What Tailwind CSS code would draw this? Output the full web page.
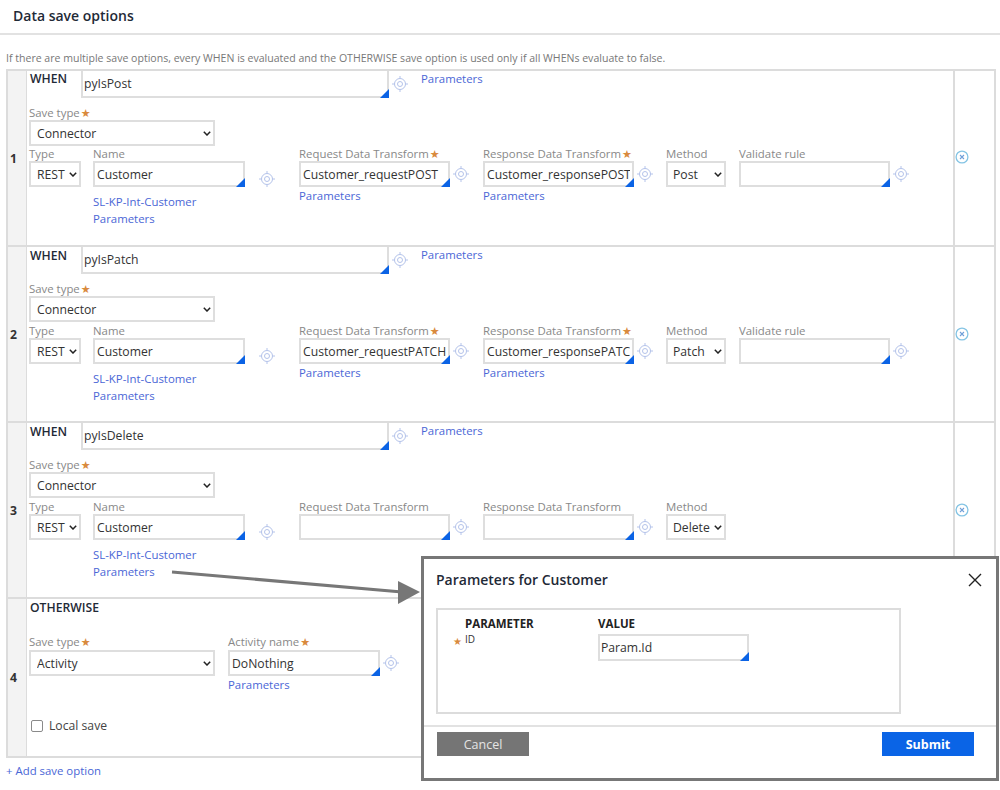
<!DOCTYPE html>
<html lang="en">
<head>
    <meta charset="UTF-8">
    <title>Data save options</title>
    <script src="https://cdn.jsdelivr.net/npm/@tailwindcss/browser@4"></script>
</head>
<body class="relative w-[1000px] h-[790px] overflow-hidden bg-white text-[#333] text-[11.4px] leading-[17px] font-['Open_Sans','DejaVu_Sans',sans-serif] [&_input]:text-[12.2px] [&_select]:text-[12.2px]">

    <svg class="hidden">
        <symbol id="target" viewBox="0 0 16 16">
            <g fill="none" stroke="#b4c3ea" stroke-width="1">
                <circle cx="8" cy="8" r="5.5"/>
                <circle cx="8" cy="8" r="2.5"/>
                <path d="M8 0v2.5M8 13.5V16M0 8h2.5M13.5 8H16"/>
            </g>
        </symbol>
        <symbol id="remove" viewBox="0 0 14 14">
            <circle cx="7" cy="7" r="5.9" fill="none" stroke="#84c4e4" stroke-width="1.3"/>
            <path d="M5 5l4 4M9 5l-4 4" fill="none" stroke="#6f9fd8" stroke-width="1.1"/>
        </symbol>
        <symbol id="chevron" viewBox="0 0 8 5">
            <path d="M.8.8L4 4l3.2-3.2" fill="none" stroke="#222" stroke-width="1.5"/>
        </symbol>
    </svg>

    <!-- Header -->
    <div class="h-[35px] border-b-2 border-[#e2e2e2] pl-[13px] pt-[5px]">
        <h1 class="text-[14px] leading-[22px] font-semibold text-[#1f2a37]">Data save options</h1>
    </div>
    <p class="pl-[6px] pt-[15px] h-[34px] text-[10.55px] leading-[17px] text-[#777]">If there are multiple save options, every WHEN is evaluated and the OTHERWISE save option is used only if all WHENs evaluate to false.</p>

    <!-- Save options table -->
    <div class="ml-[6px] w-[990px] border-2 border-[#dcdcdc]">

        <!-- Row 1 -->
        <div class="flex h-[176px] border-b-2 border-[#dcdcdc]">
            <div class="w-[19px] shrink-0 bg-[#f3f3f3] border-r border-[#dcdcdc] flex items-center justify-center pr-[7px] text-[12.2px] font-bold">1</div>
            <div class="flex-1 pl-[2px]">
                <div class="flex h-[27px]">
                    <span class="w-[52px] pl-[1px] -mt-[1px] text-[12.2px] font-semibold text-[#1f2a37]">WHEN</span>
                    <div class="relative w-[308px] h-[27px]">
                        <input class="w-full h-full border-2 border-t-0 border-[#dedede] px-[1px] bg-white" value="pyIsPost">
                        <span class="absolute right-0 bottom-0 w-[9px] h-[9px] bg-[#0b63e5] [clip-path:polygon(100%_0,100%_100%,0_100%)]"></span>
                    </div>
                    <svg class="w-[16px] h-[16px] ml-[3px] mt-[5px]"><use href="#target"/></svg>
                    <a class="ml-[13px] -mt-[1px] text-[#4a66d6]">Parameters</a>
                </div>
                <div class="pt-[6px] h-[22px] text-[#888]">Save type<span class="text-[#d98a3d] text-[11px] ml-[1px]">★</span></div>
                <div class="relative w-[186px] h-[26px]">
                    <select class="block appearance-none w-full h-full border-2 border-[#dedede] bg-white pl-[6px]"><option>Connector</option></select>
                    <svg class="absolute right-[4px] top-[11px] w-[8px] h-[5px]"><use href="#chevron"/></svg>
                </div>
                <div class="flex">
                    <div class="w-[52px] mr-[12px]">
                        <div class="h-[15px] leading-[15px] text-[#888]">Type</div>
                        <div class="relative h-[26px]">
                            <select class="block appearance-none w-full h-full border-2 border-[#dedede] bg-white pl-[6px]"><option>REST</option></select>
                            <svg class="absolute right-[4px] top-[11px] w-[8px] h-[5px]"><use href="#chevron"/></svg>
                        </div>
                    </div>
                    <div class="w-[152px] mr-[54px]">
                        <div class="h-[15px] leading-[15px] text-[#888]">Name</div>
                        <div class="relative h-[26px]">
                            <input class="w-full h-full border-2 border-[#dedede] px-[2px]" value="Customer">
                            <span class="absolute right-0 bottom-0 w-[9px] h-[9px] bg-[#0b63e5] [clip-path:polygon(100%_0,100%_100%,0_100%)]"></span>
                            <svg class="absolute left-[166px] top-[10px] w-[16px] h-[16px]"><use href="#target"/></svg>
                        </div>
                        <a class="block mt-[6px] text-[#4a66d6]">SL-KP-Int-Customer</a>
                        <a class="block text-[#4a66d6]">Parameters</a>
                    </div>
                    <div class="w-[151px] mr-[33px]">
                        <div class="h-[15px] leading-[15px] text-[#888] whitespace-nowrap">Request Data Transform<span class="text-[#d98a3d] text-[11px] ml-[1px]">★</span></div>
                        <div class="relative h-[26px]">
                            <input class="w-full h-full border-2 border-[#dedede] px-[2px]" value="Customer_requestPOST">
                            <span class="absolute right-0 bottom-0 w-[9px] h-[9px] bg-[#0b63e5] [clip-path:polygon(100%_0,100%_100%,0_100%)]"></span>
                            <svg class="absolute left-[154px] top-[5px] w-[16px] h-[16px]"><use href="#target"/></svg>
                        </div>
                        <a class="block text-[#4a66d6]">Parameters</a>
                    </div>
                    <div class="w-[151px] mr-[32px]">
                        <div class="h-[15px] leading-[15px] text-[#888] whitespace-nowrap">Response Data Transform<span class="text-[#d98a3d] text-[11px] ml-[1px]">★</span></div>
                        <div class="relative h-[26px]">
                            <input class="w-full h-full border-2 border-[#dedede] px-[2px]" value="Customer_responsePOST">
                            <span class="absolute right-0 bottom-0 w-[9px] h-[9px] bg-[#0b63e5] [clip-path:polygon(100%_0,100%_100%,0_100%)]"></span>
                            <svg class="absolute left-[154px] top-[5px] w-[16px] h-[16px]"><use href="#target"/></svg>
                        </div>
                        <a class="block text-[#4a66d6]">Parameters</a>
                    </div>
                    <div class="w-[60px] mr-[13px]">
                        <div class="h-[15px] leading-[15px] text-[#888]">Method</div>
                        <div class="relative h-[26px]">
                            <select class="block appearance-none w-full h-full border-2 border-[#dedede] bg-white pl-[5px]"><option>Post</option></select>
                            <svg class="absolute right-[4px] top-[11px] w-[8px] h-[5px]"><use href="#chevron"/></svg>
                        </div>
                    </div>
                    <div class="w-[151px]">
                        <div class="h-[15px] leading-[15px] text-[#888]">Validate rule</div>
                        <div class="relative h-[26px]">
                            <input class="w-full h-full border-2 border-[#dedede] px-[2px]">
                            <span class="absolute right-0 bottom-0 w-[9px] h-[9px] bg-[#0b63e5] [clip-path:polygon(100%_0,100%_100%,0_100%)]"></span>
                            <svg class="absolute left-[154px] top-[5px] w-[16px] h-[16px]"><use href="#target"/></svg>
                        </div>
                    </div>
                </div>
            </div>
            <div class="w-[41px] shrink-0 border-l-2 border-[#dcdcdc] flex items-center justify-center pr-[26px] pb-[3px]">
                <svg class="w-[14px] h-[14px] shrink-0"><use href="#remove"/></svg>
            </div>
        </div>

        <!-- Row 2 -->
        <div class="flex h-[176px] border-b-2 border-[#dcdcdc]">
            <div class="w-[19px] shrink-0 bg-[#f3f3f3] border-r border-[#dcdcdc] flex items-center justify-center pr-[7px] text-[12.2px] font-bold">2</div>
            <div class="flex-1 pl-[2px]">
                <div class="flex h-[27px]">
                    <span class="w-[52px] pl-[1px] text-[12.2px] font-semibold text-[#1f2a37]">WHEN</span>
                    <div class="relative w-[308px] h-[27px]">
                        <input class="w-full h-full border-2 border-t-0 border-[#dedede] px-[1px] bg-white" value="pyIsPatch">
                        <span class="absolute right-0 bottom-0 w-[9px] h-[9px] bg-[#0b63e5] [clip-path:polygon(100%_0,100%_100%,0_100%)]"></span>
                    </div>
                    <svg class="w-[16px] h-[16px] ml-[3px] mt-[5px]"><use href="#target"/></svg>
                    <a class="ml-[13px] -mt-[1px] text-[#4a66d6]">Parameters</a>
                </div>
                <div class="pt-[6px] h-[22px] text-[#888]">Save type<span class="text-[#d98a3d] text-[11px] ml-[1px]">★</span></div>
                <div class="relative w-[186px] h-[26px]">
                    <select class="block appearance-none w-full h-full border-2 border-[#dedede] bg-white pl-[6px]"><option>Connector</option></select>
                    <svg class="absolute right-[4px] top-[11px] w-[8px] h-[5px]"><use href="#chevron"/></svg>
                </div>
                <div class="flex mt-[1px]">
                    <div class="w-[52px] mr-[12px]">
                        <div class="h-[15px] leading-[15px] text-[#888]">Type</div>
                        <div class="relative h-[26px]">
                            <select class="block appearance-none w-full h-full border-2 border-[#dedede] bg-white pl-[6px]"><option>REST</option></select>
                            <svg class="absolute right-[4px] top-[11px] w-[8px] h-[5px]"><use href="#chevron"/></svg>
                        </div>
                    </div>
                    <div class="w-[152px] mr-[54px]">
                        <div class="h-[15px] leading-[15px] text-[#888]">Name</div>
                        <div class="relative h-[26px]">
                            <input class="w-full h-full border-2 border-[#dedede] px-[2px]" value="Customer">
                            <span class="absolute right-0 bottom-0 w-[9px] h-[9px] bg-[#0b63e5] [clip-path:polygon(100%_0,100%_100%,0_100%)]"></span>
                            <svg class="absolute left-[166px] top-[10px] w-[16px] h-[16px]"><use href="#target"/></svg>
                        </div>
                        <a class="block mt-[6px] text-[#4a66d6]">SL-KP-Int-Customer</a>
                        <a class="block text-[#4a66d6]">Parameters</a>
                    </div>
                    <div class="w-[151px] mr-[33px]">
                        <div class="h-[15px] leading-[15px] text-[#888] whitespace-nowrap">Request Data Transform<span class="text-[#d98a3d] text-[11px] ml-[1px]">★</span></div>
                        <div class="relative h-[26px]">
                            <input class="w-full h-full border-2 border-[#dedede] px-[2px]" value="Customer_requestPATCH">
                            <span class="absolute right-0 bottom-0 w-[9px] h-[9px] bg-[#0b63e5] [clip-path:polygon(100%_0,100%_100%,0_100%)]"></span>
                            <svg class="absolute left-[154px] top-[5px] w-[16px] h-[16px]"><use href="#target"/></svg>
                        </div>
                        <a class="block text-[#4a66d6]">Parameters</a>
                    </div>
                    <div class="w-[151px] mr-[32px]">
                        <div class="h-[15px] leading-[15px] text-[#888] whitespace-nowrap">Response Data Transform<span class="text-[#d98a3d] text-[11px] ml-[1px]">★</span></div>
                        <div class="relative h-[26px]">
                            <input class="w-full h-full border-2 border-[#dedede] px-[2px]" value="Customer_responsePATCH">
                            <span class="absolute right-0 bottom-0 w-[9px] h-[9px] bg-[#0b63e5] [clip-path:polygon(100%_0,100%_100%,0_100%)]"></span>
                            <svg class="absolute left-[154px] top-[5px] w-[16px] h-[16px]"><use href="#target"/></svg>
                        </div>
                        <a class="block text-[#4a66d6]">Parameters</a>
                    </div>
                    <div class="w-[60px] mr-[13px]">
                        <div class="h-[15px] leading-[15px] text-[#888]">Method</div>
                        <div class="relative h-[26px]">
                            <select class="block appearance-none w-full h-full border-2 border-[#dedede] bg-white pl-[5px]"><option>Patch</option></select>
                            <svg class="absolute right-[4px] top-[11px] w-[8px] h-[5px]"><use href="#chevron"/></svg>
                        </div>
                    </div>
                    <div class="w-[151px]">
                        <div class="h-[15px] leading-[15px] text-[#888]">Validate rule</div>
                        <div class="relative h-[26px]">
                            <input class="w-full h-full border-2 border-[#dedede] px-[2px]">
                            <span class="absolute right-0 bottom-0 w-[9px] h-[9px] bg-[#0b63e5] [clip-path:polygon(100%_0,100%_100%,0_100%)]"></span>
                            <svg class="absolute left-[154px] top-[5px] w-[16px] h-[16px]"><use href="#target"/></svg>
                        </div>
                    </div>
                </div>
            </div>
            <div class="w-[41px] shrink-0 border-l-2 border-[#dcdcdc] flex items-center justify-center pr-[26px]">
                <svg class="w-[14px] h-[14px] shrink-0"><use href="#remove"/></svg>
            </div>
        </div>

        <!-- Row 3 -->
        <div class="flex h-[176px] border-b-2 border-[#dcdcdc]">
            <div class="w-[19px] shrink-0 bg-[#f3f3f3] border-r border-[#dcdcdc] flex items-center justify-center pr-[7px] text-[12.2px] font-bold">3</div>
            <div class="flex-1 pl-[2px]">
                <div class="flex h-[27px]">
                    <span class="w-[52px] pl-[1px] text-[12.2px] font-semibold text-[#1f2a37]">WHEN</span>
                    <div class="relative w-[308px] h-[27px]">
                        <input class="w-full h-full border-2 border-t-0 border-[#dedede] px-[1px] bg-white" value="pyIsDelete">
                        <span class="absolute right-0 bottom-0 w-[9px] h-[9px] bg-[#0b63e5] [clip-path:polygon(100%_0,100%_100%,0_100%)]"></span>
                    </div>
                    <svg class="w-[16px] h-[16px] ml-[3px] mt-[5px]"><use href="#target"/></svg>
                    <a class="ml-[13px] -mt-[1px] text-[#4a66d6]">Parameters</a>
                </div>
                <div class="pt-[6px] h-[22px] text-[#888]">Save type<span class="text-[#d98a3d] text-[11px] ml-[1px]">★</span></div>
                <div class="relative w-[186px] h-[26px]">
                    <select class="block appearance-none w-full h-full border-2 border-[#dedede] bg-white pl-[6px]"><option>Connector</option></select>
                    <svg class="absolute right-[4px] top-[11px] w-[8px] h-[5px]"><use href="#chevron"/></svg>
                </div>
                <div class="flex mt-[1px]">
                    <div class="w-[52px] mr-[12px]">
                        <div class="h-[15px] leading-[15px] text-[#888]">Type</div>
                        <div class="relative h-[26px]">
                            <select class="block appearance-none w-full h-full border-2 border-[#dedede] bg-white pl-[6px]"><option>REST</option></select>
                            <svg class="absolute right-[4px] top-[11px] w-[8px] h-[5px]"><use href="#chevron"/></svg>
                        </div>
                    </div>
                    <div class="w-[152px] mr-[54px]">
                        <div class="h-[15px] leading-[15px] text-[#888]">Name</div>
                        <div class="relative h-[26px]">
                            <input class="w-full h-full border-2 border-[#dedede] px-[2px]" value="Customer">
                            <span class="absolute right-0 bottom-0 w-[9px] h-[9px] bg-[#0b63e5] [clip-path:polygon(100%_0,100%_100%,0_100%)]"></span>
                            <svg class="absolute left-[166px] top-[10px] w-[16px] h-[16px]"><use href="#target"/></svg>
                        </div>
                        <a class="block mt-[6px] text-[#4a66d6]">SL-KP-Int-Customer</a>
                        <a class="block text-[#4a66d6]">Parameters</a>
                    </div>
                    <div class="w-[151px] mr-[33px]">
                        <div class="h-[15px] leading-[15px] text-[#888] whitespace-nowrap">Request Data Transform</div>
                        <div class="relative h-[26px]">
                            <input class="w-full h-full border-2 border-[#dedede] px-[2px]">
                            <span class="absolute right-0 bottom-0 w-[9px] h-[9px] bg-[#0b63e5] [clip-path:polygon(100%_0,100%_100%,0_100%)]"></span>
                            <svg class="absolute left-[154px] top-[5px] w-[16px] h-[16px]"><use href="#target"/></svg>
                        </div>
                    </div>
                    <div class="w-[151px] mr-[32px]">
                        <div class="h-[15px] leading-[15px] text-[#888] whitespace-nowrap">Response Data Transform</div>
                        <div class="relative h-[26px]">
                            <input class="w-full h-full border-2 border-[#dedede] px-[2px]">
                            <span class="absolute right-0 bottom-0 w-[9px] h-[9px] bg-[#0b63e5] [clip-path:polygon(100%_0,100%_100%,0_100%)]"></span>
                            <svg class="absolute left-[154px] top-[5px] w-[16px] h-[16px]"><use href="#target"/></svg>
                        </div>
                    </div>
                    <div class="w-[60px]">
                        <div class="h-[15px] leading-[15px] text-[#888]">Method</div>
                        <div class="relative h-[26px]">
                            <select class="block appearance-none w-full h-full border-2 border-[#dedede] bg-white pl-[5px]"><option>Delete</option></select>
                            <svg class="absolute right-[4px] top-[11px] w-[8px] h-[5px]"><use href="#chevron"/></svg>
                        </div>
                    </div>
                </div>
            </div>
            <div class="ml-auto w-[41px] shrink-0 border-l-2 border-[#dcdcdc] flex items-center justify-center pr-[26px]">
                <svg class="w-[14px] h-[14px] shrink-0"><use href="#remove"/></svg>
            </div>
        </div>

        <!-- Row 4 -->
        <div class="flex h-[157px]">
            <div class="w-[19px] shrink-0 bg-[#f3f3f3] border-r border-[#dcdcdc] flex items-center justify-center pr-[7px] text-[12.2px] font-bold">4</div>
            <div class="flex-1 pl-[2px]">
                <div class="h-[36px] pl-[1px] text-[12.2px] font-semibold text-[#1f2a37]">OTHERWISE</div>
                <div class="flex">
                    <div class="w-[186px] mr-[13px]">
                        <div class="h-[15px] leading-[13px] text-[#888]">Save type<span class="text-[#d98a3d] text-[11px] ml-[1px]">★</span></div>
                        <div class="relative h-[26px]">
                            <select class="block appearance-none w-full h-full border-2 border-[#dedede] bg-white pl-[6px]"><option>Activity</option></select>
                            <svg class="absolute right-[4px] top-[11px] w-[8px] h-[5px]"><use href="#chevron"/></svg>
                        </div>
                    </div>
                    <div class="w-[152px]">
                        <div class="h-[15px] leading-[13px] text-[#888]">Activity name<span class="text-[#d98a3d] text-[11px] ml-[1px]">★</span></div>
                        <div class="relative h-[26px]">
                            <input class="w-full h-full border-2 border-[#dedede] px-[2px]" value="DoNothing">
                            <span class="absolute right-0 bottom-0 w-[9px] h-[9px] bg-[#0b63e5] [clip-path:polygon(100%_0,100%_100%,0_100%)]"></span>
                            <svg class="absolute left-[155px] top-[5px] w-[16px] h-[16px]"><use href="#target"/></svg>
                        </div>
                        <a class="block text-[#4a66d6]">Parameters</a>
                    </div>
                </div>
                <label class="flex items-center mt-[24px] pl-[2px] text-[12.2px] text-[#444]">
                    <span class="w-[12px] h-[12px] border border-[#8a8a8a] rounded-[2px] bg-white mr-[6px]"></span>
                    Local save
                </label>
            </div>
        </div>
    </div>
    <a class="block pl-[6px] pt-[4px] text-[#4a66d6]">+ Add save option</a>

    <!-- Callout arrow from the row 3 Parameters link -->
    <svg class="absolute left-0 top-0 w-[1000px] h-[790px] pointer-events-none">
        <path d="M172 572 L402 592" stroke="#777" stroke-width="3" fill="none"/>
        <polygon points="398,581 420,592 398,604" fill="#777"/>
    </svg>

    <!-- Parameters modal -->
    <div class="absolute left-[421px] top-[556px] w-[578px] h-[225px] border-[3px] border-[#777] bg-white flex flex-col">
        <div class="flex items-center justify-between h-[46px] pl-[12px] pr-[14px] pb-[5px]">
            <h2 class="text-[14px] font-semibold text-[#1f2a37]">Parameters for Customer</h2>
            <svg class="w-[14px] h-[14px]" viewBox="0 0 14 14"><path d="M1 1l12 12M13 1L1 13" stroke="#222" stroke-width="1.4" fill="none"/></svg>
        </div>
        <div class="ml-[12px] mt-[3px] w-[465px] h-[106px] border-2 border-[#dcdcdc] flex pl-[15px]">
            <div class="w-[145px] pt-[5px] relative">
                <div class="pl-[12px] text-[11.5px] font-bold text-[#222]">PARAMETER</div>
                <div class="pl-[12px] text-[10px] leading-[14px] text-[#333]"><span class="absolute left-0 top-[24px] text-[#d98a3d] text-[10px]">★</span>ID</div>
            </div>
            <div class="pt-[5px]">
                <div class="text-[11.5px] font-bold text-[#222] h-[19px]">VALUE</div>
                <div class="relative w-[151px] h-[27px]">
                    <input class="w-full h-full border-2 border-[#dedede] px-[1px]" value="Param.Id">
                    <span class="absolute right-0 bottom-0 w-[9px] h-[9px] bg-[#0b63e5] [clip-path:polygon(100%_0,100%_100%,0_100%)]"></span>
                </div>
            </div>
        </div>
        <div class="mt-[11px] flex-1 border-t-2 border-[#e2e2e2] flex justify-between items-start pl-[13px] pr-[22px] pt-[5px]">
            <button class="w-[92px] h-[24px] bg-[#757575] text-[12.5px] text-[#e4e4e4]">Cancel</button>
            <button class="w-[92px] h-[24px] bg-[#0a64e6] text-[12.5px] text-white font-bold">Submit</button>
        </div>
    </div>
</body>
</html>
